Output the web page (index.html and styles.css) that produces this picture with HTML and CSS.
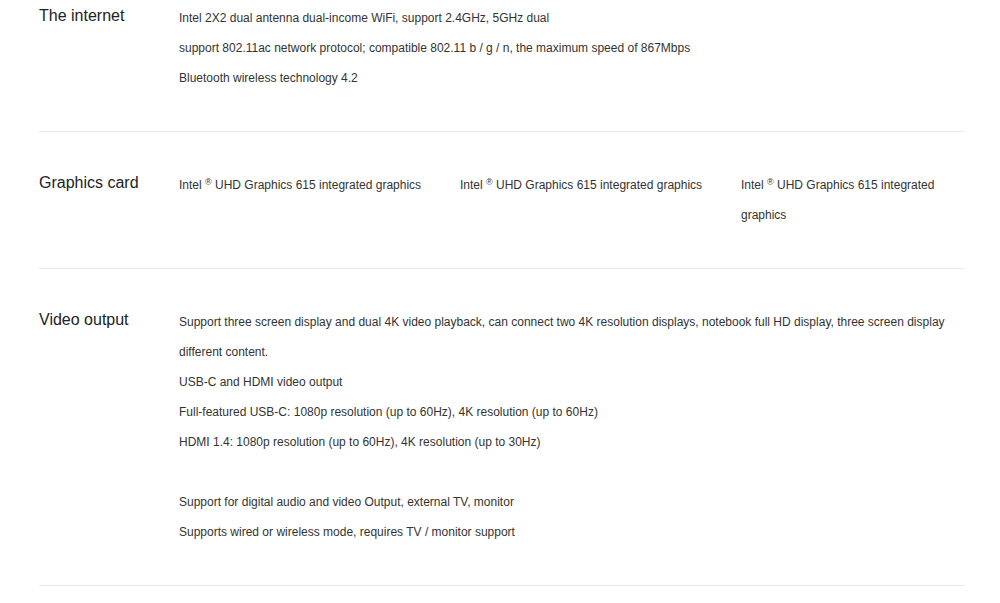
FILE: index.html
```html
<!DOCTYPE html>
<html>
<head>
<meta charset="utf-8">
<link rel="stylesheet" href="styles.css">
</head>
<body>
<div class="specs">
  <div class="row first">
    <div class="label">The internet</div>
    <div class="content">
      <p>Intel 2X2 dual antenna dual-income WiFi, support 2.4GHz, 5GHz dual</p>
      <p>support 802.11ac network protocol; compatible 802.11 b / g / n, the maximum speed of 867Mbps</p>
      <p>Bluetooth wireless technology 4.2</p>
    </div>
  </div>
  <div class="row">
    <div class="label">Graphics card</div>
    <div class="content cols">
      <p>Intel <sup>®</sup> UHD Graphics 615 integrated graphics</p>
      <p>Intel <sup>®</sup> UHD Graphics 615 integrated graphics</p>
      <p>Intel <sup>®</sup> UHD Graphics 615 integrated graphics</p>
    </div>
  </div>
  <div class="row">
    <div class="label">Video output</div>
    <div class="content">
      <p>Support three screen display and dual 4K video playback, can connect two 4K resolution displays, notebook full HD display, three screen display different content.</p>
      <p>USB-C and HDMI video output</p>
      <p>Full-featured USB-C: 1080p resolution (up to 60Hz), 4K resolution (up to 60Hz)</p>
      <p>HDMI 1.4: 1080p resolution (up to 60Hz), 4K resolution (up to 30Hz)</p>
      <p class="blank">&nbsp;</p>
      <p>Support for digital audio and video Output, external TV, monitor</p>
      <p>Supports wired or wireless mode, requires TV / monitor support</p>
    </div>
  </div>
</div>
</body>
</html>
```

FILE: styles.css
```css
html, body {
  margin: 0;
  padding: 0;
  background: #fff;
}
body {
  font-family: "Liberation Sans", Arial, sans-serif;
  color: #333;
}
.specs {
  margin-left: 39px;
  width: 926px;
}
.row {
  display: flex;
  padding: 38px 0 38px;
  border-bottom: 1px solid #e8e8e8;
}
.row.first {
  padding-top: 3px;
  padding-bottom: 38px;
}
.label {
  width: 140px;
  flex: none;
  font-size: 16px;
  line-height: 26px;
  color: #222;
}
.content {
  flex: 1;
  font-size: 12px;
  line-height: 30px;
  color: #333;
}
.content p {
  margin: 0;
}
.cols {
  display: grid;
  grid-template-columns: 281px 281px 1fr;
}
.cols p {
  padding-right: 20px;
}
sup {
  font-size: 9px;
  line-height: 0;
  vertical-align: 4px;
}
```
